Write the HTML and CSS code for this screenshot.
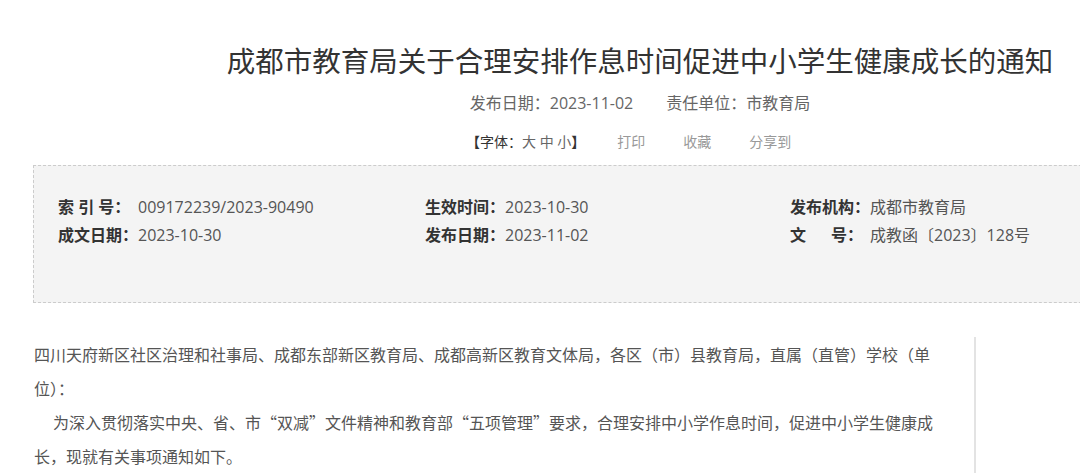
FILE: index.html
```html
<!DOCTYPE html>
<html lang="zh-CN">
<head>
<meta charset="utf-8">
<title>成都市教育局关于合理安排作息时间促进中小学生健康成长的通知</title>
<link rel="stylesheet" href="styles.css">
</head>
<body>
<div class="page">
  <h1 class="title">成都市教育局关于合理安排作息时间促进中小学生健康成长的通知</h1>
  <div class="meta">
    <span class="meta-item">发布日期：2023-11-02</span>
    <span class="meta-item">责任单位：市教育局</span>
  </div>
  <div class="toolbar">
    <span class="fontsize"><b class="br">【</b>字体：<span class="sizes">大 中 小</span><b class="br">】</b></span>
    <span class="tool">打印</span>
    <span class="tool">收藏</span>
    <span class="tool">分享到</span>
  </div>
  <div class="infobox">
    <div class="info-grid">
      <div class="info"><span class="label">索 引 号：</span><span class="value">009172239/2023-90490</span></div>
      <div class="info"><span class="label">生效时间：</span><span class="value">2023-10-30</span></div>
      <div class="info"><span class="label">发布机构：</span><span class="value">成都市教育局</span></div>
      <div class="info"><span class="label">成文日期：</span><span class="value">2023-10-30</span></div>
      <div class="info"><span class="label">发布日期：</span><span class="value">2023-11-02</span></div>
      <div class="info"><span class="label label-wen"><span>文</span><span>号：</span></span><span class="value">成教函〔2023〕128号</span></div>
    </div>
  </div>
  <div class="article">
    <div class="article-body">
      <p class="p-plain">四川天府新区社区治理和社事局、成都东部新区教育局、成都高新区教育文体局，各区（市）县教育局，直属（直管）学校（单位）：</p>
      <p class="p-indent">为深入贯彻落实中央、省、市“双减”文件精神和教育部“五项管理”要求，合理安排中小学作息时间，促进中小学生健康成长，现就有关事项通知如下。</p>
    </div>
  </div>
</div>
</body>
</html>
```

FILE: styles.css
```css
html, body {
  margin: 0;
  padding: 0;
  background: #ffffff;
}
body {
  overflow: hidden;
  font-family: "Open Sans", "Noto Sans CJK SC", sans-serif;
  color: #333333;
}
.page {
  width: 1214px;
  margin-left: 33px;
  padding-top: 41px;
}
.title {
  margin: 0;
  font-size: 28.5px;
  line-height: 40px;
  font-weight: 400;
  color: #333333;
  text-align: center;
  white-space: nowrap;
}
.meta {
  margin-top: 10px;
  display: flex;
  justify-content: center;
  gap: 33px;
  font-size: 16px;
  line-height: 24px;
  color: #666666;
}
.toolbar {
  margin-top: 17px;
  padding-left: 433px;
  display: flex;
  gap: 38px;
  font-size: 14px;
  line-height: 20px;
  color: #999999;
}
.fontsize {
  color: #333333;
  margin-right: -6px;
}
.br {
  font-weight: 700;
}
.sizes {
  color: #666666;
}
.infobox {
  margin-top: 13px;
  background: #f4f4f4;
  border: 1px dashed #cccccc;
  padding: 27px 24px 53px;
}
.info-grid {
  display: grid;
  grid-template-columns: 367px 365px 1fr;
  grid-auto-rows: 28px;
  font-size: 16px;
  line-height: 28px;
}
.info {
  display: flex;
  white-space: nowrap;
}
.label {
  width: 80px;
  flex: none;
  font-weight: 700;
  color: #333333;
}
.label-wen {
  display: flex;
  justify-content: space-between;
  width: 73px;
  margin-right: 7px;
}
.value {
  color: #555555;
}
.article {
  margin-top: 34px;
}
.article-body {
  width: 905px;
  padding-left: 1px;
  padding-right: 35px;
  border-right: 2px solid #e3e3e3;
  font-family: "Noto Sans CJK SC", sans-serif;
  font-size: 16px;
  line-height: 34px;
  color: #555555;
}
.article-body p {
  margin: 0;
}
.p-indent {
  text-indent: 19px;
}
```
